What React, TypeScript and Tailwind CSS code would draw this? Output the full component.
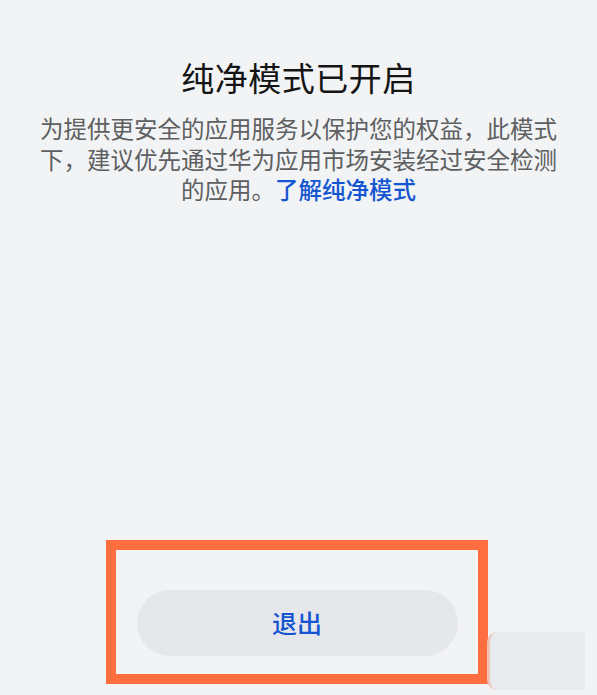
export default function App() {
  return (
    <div
      className="relative w-[597px] h-[695px] overflow-hidden bg-[#f1f3f5]"
      style={{ fontFamily: '"Noto Sans CJK SC", "Noto Sans", sans-serif' }}
    >
      <div className="flex flex-col items-center pt-[53px]">
        <h1 className="text-[33px] leading-[48px] font-normal text-[#141414] tracking-[0.5px]">
          纯净模式已开启
        </h1>
        <p className="mt-[12px] w-[524px] text-center text-[23.5px] leading-[30.5px] text-[#5e5f61]">
          为提供更安全的应用服务以保护您的权益，此模式下，建议优先通过华为应用市场安装经过安全检测的应用。
          <span className="font-medium text-[#1456d1]">了解纯净模式</span>
        </p>
      </div>

      <div className="absolute left-[106px] top-[540px] w-[382px] h-[144px] border-[10px] border-[#fe6e40] flex justify-center pt-[40px]">
        <button className="w-[321px] h-[66px] rounded-full bg-[#e6e7ea] text-[25px] font-medium text-[#1456d1]">
          退出
        </button>
      </div>

      <div className="absolute left-[487px] top-[632px] w-[98px] h-[58px] rounded-l-[10px] bg-[#e8ebed] border-l-[3px] border-[#efc3b4]" />
    </div>
  );
}
